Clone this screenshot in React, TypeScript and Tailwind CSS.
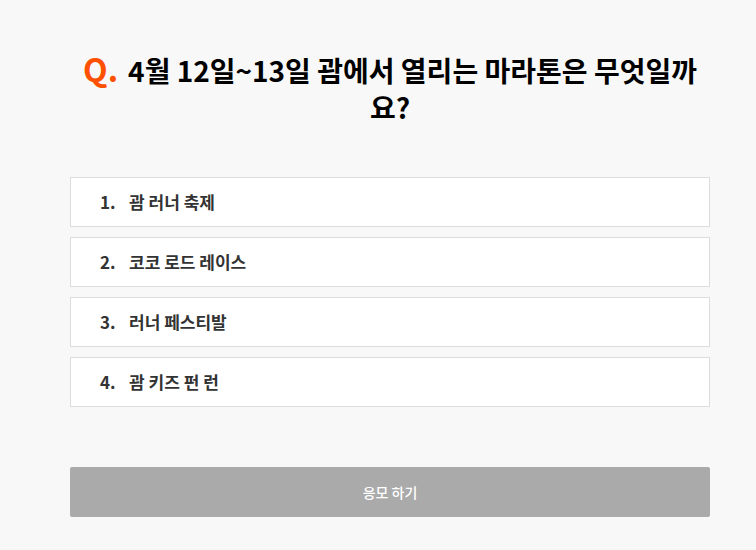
const options = ["괌 러너 축제", "코코 로드 레이스", "러너 페스티발", "괌 키즈 펀 런"];

export default function App() {
  return (
    <div
      className="min-h-[550px] bg-[#f8f8f8] pt-[50px]"
      style={{ fontFamily: '"Noto Sans CJK KR", "Noto Sans", sans-serif' }}
    >
      <div className="ml-[70px] w-[640px]">
        <h1 className="px-[8px] text-center text-[28px] font-bold leading-[37px] text-black">
          <span className="mr-[10px] text-[32px] text-[#ff5000]">Q.</span>
          4월 12일~13일 괌에서 열리는 마라톤은 무엇일까요?
        </h1>
        <ul className="mt-[51px] flex flex-col gap-[10px]">
          {options.map((item, i) => (
            <li
              key={item}
              className="flex h-[50px] items-center border border-[#dddddd] bg-white pl-[29px] text-[17px] font-bold text-[#333333]"
            >
              <span className="w-[29px]">{i + 1}.</span>
              <span>{item}</span>
            </li>
          ))}
        </ul>
        <button className="mt-[60px] flex h-[50px] w-full items-center justify-center rounded-[2px] bg-[#aaaaaa] text-[14px] font-medium text-white">
          응모 하기
        </button>
      </div>
    </div>
  );
}
